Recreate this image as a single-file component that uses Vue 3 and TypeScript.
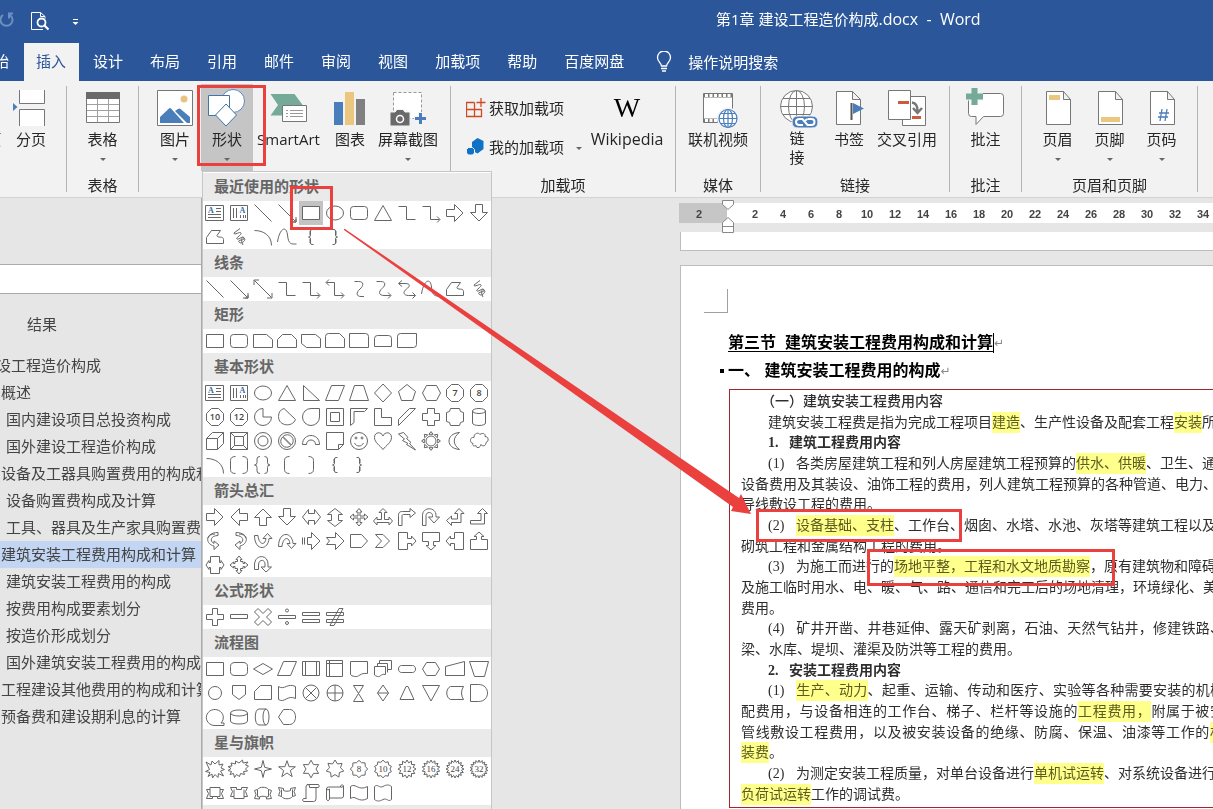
<script setup lang="ts">
interface Shape {
  d: string
  label?: string
  serif?: boolean
  letter?: number
}
interface Section {
  title: string
  shapes: string[]
}
interface Outline {
  text: string
  level: number
  current?: boolean
}
interface Piece {
  t: string
  hl?: boolean
}
interface Line {
  kind: 'caption' | 'bold' | 'item' | 'indent' | 'plain'
  no?: string
  full?: boolean
  parts: Piece[]
}

function polar(n: number, radii: number[], start = -90, cx = 12, cy = 12): string {
  const total = n * radii.length
  let out = ''
  for (let i = 0; i < total; i++) {
    const a = ((start + (360 / total) * i) * Math.PI) / 180
    const r = radii[i % radii.length]
    out += (i ? 'L' : 'M') + (cx + r * Math.cos(a)).toFixed(2) + ' ' + (cy + r * Math.sin(a)).toFixed(2)
  }
  return out + 'z'
}
function oval(rx: number, ry: number, cx = 12, cy = 12): string {
  return `M${cx - rx} ${cy}a${rx} ${ry} 0 1 0 ${2 * rx} 0a${rx} ${ry} 0 1 0 ${-2 * rx} 0z`
}
function rays(): string {
  let out = oval(5, 5)
  for (let i = 0; i < 8; i++) {
    const a = (i * Math.PI) / 4
    const p = (r: number, k: number) =>
      (12 + r * Math.cos(a + k)).toFixed(2) + ' ' + (12 + r * Math.sin(a + k)).toFixed(2)
    out += `M${p(9.4, 0)}L${p(7, 0.3)}L${p(7, -0.3)}z`
  }
  return out
}

const octagon = 'M8.5 3.5h7l5 5v7l-5 5h-7l-5-5v-7z'
const rect = 'M3.5 5.5h17v13h-17z'
const ring = oval(8.5, 8.5)

const shapes: Record<string, Shape> = {
  textBox: { d: 'M2.5 4.5h18v15h-18zM13 7.5h5M13 10.5h5M5 13.5h13M5 16.5h13', letter: 8 },
  verticalTextBox: { d: 'M3.5 4.5h17v15h-17zM6.5 7v10M9.5 7v10M13.5 14v3M16.5 14v3M18.5 14v3', letter: 15.5 },
  line: { d: 'M3.5 3.5l17 17' },
  arrowLine: { d: 'M3.5 3.5l17 17M21 16v5h-5M21 18v3h-3' },
  doubleArrowLine: { d: 'M3.5 3.5l17 17M21 16v5h-5M3 8v-5h5' },
  rect: { d: rect },
  ellipse: { d: oval(8.5, 7) },
  roundRect: { d: 'M6.5 5.5h11q3 0 3 3v7q0 3-3 3h-11q-3 0-3-3v-7q0-3 3-3z' },
  triangle: { d: 'M12 4.5l8.5 15h-17z' },
  elbow: { d: 'M3.5 5.5h8v13h9' },
  elbowArrow: { d: 'M3.5 5.5h8v13h9M18 15.5l3 3-3 3' },
  elbowDouble: { d: 'M3.5 5.5h8v13h9M18 15.5l3 3-3 3M6 2.5l-3 3 3 3' },
  curveLine: { d: 'M7.5 4.5h4c6 0 5 4.5 1.5 7.5c-4 3.5-4 7.5 1 7.5h3' },
  curveArrow: { d: 'M5.5 4.5h4c6 0 5 4 1.5 7c-4 3.5-3 7 2 7h6.5M17 15.5l3 3-3 3' },
  curveDouble: { d: 'M4 6.5h6c6 0 5 3 1.5 5.5c-4 3-3 6.5 2 6.5h6.5M17.5 15.5l3 3-3 3M7 3.5l-3.5 3 3.5 3' },
  arrowRight: { d: 'M3.5 8.5h8v-5l8.5 8.5-8.5 8.5v-5h-8z' },
  arrowLeft: { d: 'M20.5 8.5h-8v-5l-8.5 8.5 8.5 8.5v-5h8z' },
  arrowUp: { d: 'M8.5 20.5v-8h-5l8.5-8.5 8.5 8.5h-5v8z' },
  arrowDown: { d: 'M8.5 3.5v8h-5l8.5 8.5 8.5-8.5h-5v-8z' },
  freeform: { d: 'M3.5 18.5v-6l5-7h9l-3.5 5c0 3 6.5 0 6.5 4v4z' },
  scribble: { d: 'M13 3.5l-6 4.5c0 3 6-2 7 0s-6 5-4 6 6-4 7-1-7 1-5 4 8-2 5-4-3 4-1 7' },
  arc: { d: 'M3.5 5.5c9 0 17 5 17 15' },
  curve: { d: 'M2.5 17c2-14 9-17 10-7s4 9 9 9' },
  braceLeft: { d: 'M14.5 4.5h-1.5q-1.5 0-1.5 1.5v4q0 2-2 2q2 0 2 2v4q0 1.5 1.5 1.5h1.5M11 6v4M11 14v4' },
  braceRight: { d: 'M9.5 4.5h1.5q1.5 0 1.5 1.5v4q0 2 2 2q-2 0-2 2v4q0 1.5-1.5 1.5h-1.5M13 6v4M13 14v4' },
  snipOne: { d: 'M2.5 5.5h13l6 5v8h-19z' },
  snipTwo: { d: 'M7.5 5.5h9l5 5v8h-19v-8z' },
  snipDiagonal: { d: 'M2.5 5.5h14l5 4v9h-14l-5-4z' },
  snipRound: { d: 'M5.5 4.5h11l5 5v9h-19v-11q0-3 3-3z' },
  roundOne: { d: 'M2.5 4.5h16q3 0 3 3v11h-19z' },
  roundTwo: { d: 'M6.5 6.5h11q3 0 3 3v8h-17v-8q0-3 3-3z' },
  roundDiagonal: { d: 'M5.5 4.5h16v11q0 3-3 3h-16v-11q0-3 3-3z' },
  rightTriangle: { d: 'M4.5 4.5l16 15h-16z' },
  parallelogram: { d: 'M8.5 4.5h13l-6 15h-13z' },
  trapezoid: { d: 'M7.5 4.5h9l5 15h-19z' },
  diamond: { d: 'M12 3l8.5 9-8.5 9-8.5-9z' },
  pentagon: { d: 'M12 3.5l8.5 7-3 9h-11l-3-9z' },
  hexagon: { d: 'M7.5 4.5h10l4 7.5-4 7.5h-10l-4-7.5z' },
  heptagon: { d: octagon, label: '7' },
  octagon: { d: octagon, label: '8' },
  decagon: { d: octagon, label: '10' },
  dodecagon: { d: octagon, label: '12' },
  pie: { d: 'M12 3.5v8.5h8.5a8.5 8.5 0 1 1-8.5-8.5z' },
  chord: { d: 'M9 3.5l11.5 11c-3 8-17 7-17-3 0-4 2-7 5.5-8z' },
  teardrop: { d: 'M12 3.5h8.5v8.5a8.5 8.5 0 1 1-8.5-8.5z' },
  frame: { d: 'M3.5 3.5h17v17h-17zM7.5 7.5h9v9h-9z' },
  halfFrame: { d: 'M3.5 3.5h17l-3 3h-10.5v11l-3.5 3z' },
  corner: { d: 'M3.5 3.5h7v9h10v8h-17z' },
  stripe: { d: 'M14.5 3.5h6l-17 17v-6z' },
  cross: { d: 'M8.5 3.5h7v5h5v7h-5v5h-7v-5h-5v-7h5z' },
  plaque: { d: 'M7.5 3.5h9q0 4 4 4v9q-4 0-4 4h-9q0-4-4-4v-9q4 0 4-4z' },
  can: { d: oval(6.5, 2.5, 12, 6) + 'M5.5 6v12c0 3.3 13 3.3 13 0v-12' },
  cube: { d: 'M3.5 9.5l6-6h11v11l-6 6h-11zM3.5 9.5h11v11M14.5 9.5l6-6' },
  bevel: { d: 'M3.5 3.5h17v17h-17zM7.5 7.5h9v9h-9zM3.5 3.5l4 4M20.5 3.5l-4 4M3.5 20.5l4-4M20.5 20.5l-4-4' },
  donut: { d: ring + oval(5, 5) },
  forbidden: { d: ring + 'M8 7.5a6 6 0 0 1 8.5 8.5zM7.5 8a6 6 0 0 0 8.5 8.5z' },
  blockArc: { d: 'M3.5 15.5c0-12 17-12 17 0h-4c0-6-9-6-9 0z' },
  foldedCorner: { d: 'M3.5 3.5h17v12l-5 5h-12zM15.5 20.5v-5h5' },
  smiley: { d: ring + oval(1, 1, 9, 9) + oval(1, 1, 15, 9) + 'M7.5 14c2 4 7 4 9 0' },
  heart: { d: 'M12 20.5c-3-4-8.5-7-8.5-12c0-6 7-6 8.5-1.5c1.5-4.5 8.5-4.5 8.5 1.5c0 5-5.5 8-8.5 12z' },
  lightning: { d: 'M3.5 5l5-1.5 4.5 5-1.5 1 4.5 4-1.5 1 6 6.5-9-5.5 1.5-1-5.5-3 2-1.5z' },
  sun: { d: rays() },
  moon: { d: 'M16.5 3.5c-14 1-14 16 0 17c-7-5-7-12 0-17z' },
  cloud: { d: 'M6 14.5c-4-1-3-7 1-6c0-5 5-5 6-3c2-2 6-1 5 2c4 0 4 5 1 6c0 4-4 4-5 2c-1 4-5 4-5 1c-2 1-4 0-3-2z' },
  bracketPair: { d: 'M8.5 3.5q-5 0-5 4v9q0 4 5 4M15.5 3.5q5 0 5 4v9q0 4-5 4' },
  bracePair: { d: 'M9 3.5q-3 0-3 2.5v3.5q0 2.5-2.5 2.5q2.5 0 2.5 2.5v3.5q0 2.5 3 2.5M13.5 3.5q3 0 3 2.5v3.5q0 2.5 2.5 2.5q-2.5 0-2.5 2.5v3.5q0 2.5-3 2.5' },
  bracketLeft: { d: 'M14.5 3.5q-5 0-5 4v9q0 4 5 4' },
  bracketRight: { d: 'M9.5 3.5q5 0 5 4v9q0 4-5 4' },
  leftRight: { d: 'M3.5 12l6-7.5v4h6v-4l6 7.5-6 7.5v-4h-6v4z' },
  upDown: { d: 'M12 3.5l7.5 6h-4v6h4l-7.5 6-7.5-6h4v-6h-4z' },
  quadArrow: { d: 'M12 3.5l3 3.5h-2v4h4.5V9l3.5 3-3.5 3v-2H13v4.5h2L12 21l-3-3.5h2V13H6.5v2L3 12l3.5-3v2H11V7H9z' },
  threeWay: { d: 'M12 3.5l4 4h-2.5v7H18v-2.5l3.5 4-3.5 4V17.5H6V20l-3.5-4 3.5-4v2.5h4.5v-7H8z' },
  bentArrow: { d: 'M3.5 20.5v-10c0-3 1-4 4-4h7.5v-3l5.5 4.5-5.5 4.5v-3h-6.5c-1 0-1.5.5-1.5 1.5v9.5z' },
  uTurn: { d: 'M3.5 20.5V10.5c0-9 13.5-9 13.5 0v1.5h3.5l-5.5 6-5.5-6h4v-1.5c0-4-6.5-4-6.5 0v10z' },
  leftUp: { d: 'M3.5 15.5l5-4.5v3h6V8.5h-3l4.5-5 5 5h-3v9h-9.5v3z' },
  bentUp: { d: 'M3.5 15.5h10.5v-7h-3.5l5-5 5 5h-3v10.5h-14z' },
  curvedRight: { d: 'M15 3.5C2 3.5 2 15 11 17v3.5l5-4.5-5-4v2.5C6 12 8 6.5 15 6.5zM5 9c1-3 4-4 7-4' },
  curvedLeft: { d: 'M9 3.5C22 3.5 22 15 13 17v3.5l-5-4.5 5-4v2.5C18 12 16 6.5 9 6.5zM19 9c-1-3-4-4-7-4' },
  curvedUp: { d: 'M3.5 6.5C3.5 22 17 22 18 9.5h3l-4.5-5-4.5 5h3C14 17 8 16 7 6.5z' },
  curvedDown: { d: 'M3.5 17.5C3.5 2 17 2 18 14.5h3l-4.5 5-4.5-5h3C14 7 8 8 7 17.5z' },
  stripedArrow: { d: 'M3.5 8.5v7M5.5 8.5v7M8.5 8.5h4v-5l8.5 8.5-8.5 8.5v-5h-4z' },
  notchedArrow: { d: 'M3.5 8.5h9v-5l8.5 8.5-8.5 8.5v-5h-9l3-3.5z' },
  homePlate: { d: 'M3.5 5.5h11l6 6.5-6 6.5h-11z' },
  chevron: { d: 'M4.5 5.5h7.5l6.5 6.5-6.5 6.5h-7.5l6-6.5z' },
  calloutRight: { d: 'M3.5 3.5h9v6h4v-2.5l4.5 5-4.5 5v-2.5h-4v6h-9z' },
  calloutDown: { d: 'M3.5 3.5h17v9h-6v4h2.5l-5 4.5-5-4.5h2.5v-4h-6z' },
  calloutLeft: { d: 'M20.5 3.5h-9v6h-4v-2.5l-4.5 5 4.5 5v-2.5h4v6h9z' },
  calloutUp: { d: 'M3.5 20.5h17v-10h-6v-3h2.5l-5-4.5-5 4.5h2.5v3h-6z' },
  calloutLeftRight: { d: 'M7.5 3.5h9v6h1.5v-2l3 4.5-3 4.5v-2h-1.5v6h-9v-6h-1.5v2l-3-4.5 3-4.5v2h1.5z' },
  calloutQuad: { d: 'M12 3l3 3.5h-1.5v2H16V10.5h1.5V9l3.5 3-3.5 3v-1.5H16v2h-2.5v2H15L12 21l-3-3.5h1.5v-2H8V13.5H6.5V15L3 12l3.5-3v1.5H8V8.5h2.5v-2H9z' },
  circularArrow: { d: 'M3.5 16.5V12c0-11 13.5-11 13.5-1v3h3.5l-5.5 5-5-5h4v-3c0-5-6.5-5-6.5 1v4.5z' },
  plus: { d: 'M9.5 3.5h5v6h6v5h-6v6h-5v-6h-6v-5h6z' },
  minus: { d: 'M3.5 9.5h17v4h-17z' },
  multiply: { d: 'M7 3.5l5 5 5-5 3.5 3.5-5 5 5 5-3.5 3.5-5-5-5 5-3.5-3.5 5-5-5-5z' },
  divide: { d: 'M3.5 10.5h17v3h-17z' + oval(1.5, 1.5, 12, 5.5) + oval(1.5, 1.5, 12, 18) },
  equal: { d: 'M3.5 7.5h17v3h-17zM3.5 14.5h17v3h-17z' },
  notEqual: { d: 'M3.5 7.5h17v3h-17zM3.5 14.5h17v3h-17zM7 20.5l9-17h4l-9 17z' },
  flowParallelogram: { d: 'M8.5 4.5h13l-6 14h-13z' },
  flowRound: { d: 'M8 5.5h8q4.5 0 4.5 4v5q0 4-4.5 4h-8q-4.5 0-4.5-4v-5q0-4 4.5-4z' },
  decision: { d: 'M12 6.5l9.5 5.5-9.5 5.5-9.5-5.5z' },
  predefined: { d: 'M3.5 4.5h17v14h-17zM6.5 4.5v14M17.5 4.5v14' },
  internal: { d: 'M3.5 3.5h16v16h-16zM6.5 3.5v16M3.5 6.5h16' },
  document: { d: 'M3.5 4.5h17v12c-8-1-8 4-13 3q-3-.5-4-2z' },
  multiDocument: { d: 'M3.5 9.5h11v8c-5-1-5 3-8 2q-2-.5-3-1.5zM6.5 9.5v-3h10v9M8.5 6.5v-3h12v9h-4' },
  terminator: { d: 'M6.5 8.5h11c4 0 4 7 0 7h-11c-4 0-4-7 0-7z' },
  preparation: { d: 'M7.5 5.5h9l4 6.5-4 6.5h-9l-4-6.5z' },
  manualInput: { d: 'M2.5 9.5l19-5v14h-19z' },
  manualOperation: { d: 'M2.5 4.5h19l-4 15h-10z' },
  connector: { d: oval(6.5, 6.5) },
  offPage: { d: 'M5.5 4.5h13v9l-6.5 5-6.5-5z' },
  card: { d: 'M3.5 10.5l6-6h11v14h-17z' },
  tape: { d: 'M3.5 5.5c6 4 9-4 17 0v12c-8-4-11 5-17 1z' },
  summing: { d: oval(8, 8) + 'M6.5 6.5l11 11M17.5 6.5l-11 11' },
  or: { d: oval(8, 8) + 'M12 4v16M4 12h16' },
  collate: { d: 'M6.5 4.5h10l-10 16h10z' },
  sort: { d: 'M12 4l5.5 8-5.5 8-5.5-8zM6.5 12h11' },
  extract: { d: 'M11 5.5h2l6 13h-14z' },
  merge: { d: 'M3.5 4.5h17l-8.5 15.5z' },
  stored: { d: 'M7.5 5.5h13q-4 6.5 0 13h-13c-5-2-5-11 0-13z' },
  delay: { d: 'M3.5 3.5h8c12 0 12 17 0 17h-8z' },
  sequential: { d: 'M12 20.5a8.5 8 0 1 1 6-2.5h3v2.5z' },
  magneticDisk: { d: oval(8.5, 3, 12, 8) + 'M3.5 8v8c0 4 17 4 17 0v-8' },
  directAccess: { d: oval(3, 8, 15, 12) + 'M15 4h-7c-5 0-5 16 0 16h7' },
  display: { d: 'M8.5 4.5h6c8 0 8 15 0 15h-6l-5-7.5z' },
  burstOne: { d: 'M3 5l5 3 1-4 3 3 4-3.5v4.5l4-1-2 4 3.5 1.5-4 1.5 3 5-5-2.5-.5 4-3-3-2.5 3.5-.5-4-4 2.5 2-4-4.5-1 4-2z' },
  burstTwo: { d: 'M4 6l4.5 1 0-3 3.5 2 3.5-3 .5 3 5-1-2.5 3 3 1-3 3 2 2-4 .5 1 3-4-1-1 3-3-2-2 3-1-4-3.5 1 1.5-3-3.5-1 3-2-3-2 4-.5z' },
  star4: { d: polar(4, [8.5, 2.4]) },
  star5: { d: polar(5, [8.8, 3.5], -90, 12, 12.5) },
  star6: { d: polar(6, [8.8, 5]) },
  star7: { d: polar(7, [9, 5.6]) },
  star8: { d: polar(8, [8.6, 6.8]), label: '8', serif: true },
  star10: { d: polar(10, [8.8, 7]), label: '10', serif: true },
  star12: { d: polar(12, [9, 6.4]), label: '12', serif: true },
  star16: { d: polar(14, [9, 6.4]), label: '16', serif: true },
  star24: { d: polar(16, [9, 6.6]), label: '24', serif: true },
  star32: { d: polar(18, [9, 6.6]), label: '32', serif: true },
  ribbonUp: { d: 'M3.5 8.5h3.5v-2h10v2h3.5l-2 4 2 5h-6v-2h-5v2h-6l2-5zM7 8.5v7h2.5M17 8.5v7h-2.5' },
  ribbonDown: { d: 'M3.5 6.5h6v2h5v-2h6l-2 4 2 5h-3.5v2h-10v-2h-3.5l2-5zM7 15.5v-7M17 15.5v-7' },
  curvedRibbonUp: { d: 'M3.5 9.5l3-1c2-3 9-3 11 0l3 1-1.5 4 1.5 4-5 .5v-2c-2-1-5-1-7 0v2l-5-.5 1.5-4zM6.5 8.5v7l2 .5M17.5 8.5v7l-2 .5' },
  curvedRibbonDown: { d: 'M3.5 6.5l5 1v2c2 1 5 1 7 0v-2l5-1-1.5 4 1.5 4-3 1c-2 3-9 3-11 0l-3-1 1.5-4zM6.5 15.5v-7M17.5 15.5v-7' },
  scrollVertical: { d: 'M8 3.5h11.5q1.5 1.5 0 3h-2.5v11.5q0 2.5-2.5 2.5h-10q-2-1.5 0-3h2.5v-11.5q0-2.5 2-2.5t1.5 3h6.5M5.5 17.5h2' },
  scrollHorizontal: { d: 'M3.5 8q0-2 2-2h12v-1q1.5-3 3 0v10q0 2-2 2h-12v1.5q-1.5 2.5-3 0zM3.5 8q1.5 2 3 0v9M17.5 6q1.5 1 3-1' },
  wave: { d: 'M3.5 5.5c5-4 8 5 17 0v12c-9 5-12-4-17 0z' },
  doubleWave: { d: 'M3.5 5.5c3-3 5 2 8.5 0s6-2 8.5 0v13c-3 3-5-2-8.5 0s-6 2-8.5 0z' },
}

const sections: Section[] = [
  {
    title: '最近使用的形状',
    shapes: ['textBox', 'verticalTextBox', 'line', 'arrowLine', 'rect', 'ellipse', 'roundRect', 'triangle', 'elbow', 'elbowArrow', 'arrowRight', 'arrowDown', 'freeform', 'scribble', 'arc', 'curve', 'braceLeft', 'braceRight'],
  },
  {
    title: '线条',
    shapes: ['line', 'arrowLine', 'doubleArrowLine', 'elbow', 'elbowArrow', 'elbowDouble', 'curveLine', 'curveArrow', 'curveDouble', 'curve', 'freeform', 'scribble'],
  },
  {
    title: '矩形',
    shapes: ['rect', 'roundRect', 'snipOne', 'snipTwo', 'snipDiagonal', 'snipRound', 'roundOne', 'roundTwo', 'roundDiagonal'],
  },
  {
    title: '基本形状',
    shapes: ['textBox', 'verticalTextBox', 'ellipse', 'triangle', 'rightTriangle', 'parallelogram', 'trapezoid', 'diamond', 'pentagon', 'hexagon', 'heptagon', 'octagon', 'decagon', 'dodecagon', 'pie', 'chord', 'teardrop', 'frame', 'halfFrame', 'corner', 'stripe', 'cross', 'plaque', 'can', 'cube', 'bevel', 'donut', 'forbidden', 'blockArc', 'foldedCorner', 'smiley', 'heart', 'lightning', 'sun', 'moon', 'cloud', 'arc', 'bracketPair', 'bracePair', 'bracketLeft', 'bracketRight', 'braceLeft', 'braceRight'],
  },
  {
    title: '箭头总汇',
    shapes: ['arrowRight', 'arrowLeft', 'arrowUp', 'arrowDown', 'leftRight', 'upDown', 'quadArrow', 'threeWay', 'bentArrow', 'uTurn', 'leftUp', 'bentUp', 'curvedRight', 'curvedLeft', 'curvedUp', 'curvedDown', 'stripedArrow', 'notchedArrow', 'homePlate', 'chevron', 'calloutRight', 'calloutDown', 'calloutLeft', 'calloutUp', 'calloutLeftRight', 'calloutQuad', 'circularArrow'],
  },
  { title: '公式形状', shapes: ['plus', 'minus', 'multiply', 'divide', 'equal', 'notEqual'] },
  {
    title: '流程图',
    shapes: ['rect', 'flowRound', 'decision', 'flowParallelogram', 'predefined', 'internal', 'document', 'multiDocument', 'terminator', 'preparation', 'manualInput', 'manualOperation', 'connector', 'offPage', 'card', 'tape', 'summing', 'or', 'collate', 'sort', 'extract', 'merge', 'stored', 'delay', 'sequential', 'magneticDisk', 'directAccess', 'display'],
  },
  {
    title: '星与旗帜',
    shapes: ['burstOne', 'burstTwo', 'star4', 'star5', 'star6', 'star7', 'star8', 'star10', 'star12', 'star16', 'star24', 'star32', 'ribbonUp', 'ribbonDown', 'curvedRibbonUp', 'curvedRibbonDown', 'scrollVertical', 'scrollHorizontal', 'wave', 'doubleWave'],
  },
]

const tabs = ['开始', '插入', '设计', '布局', '引用', '邮件', '审阅', '视图', '加载项', '帮助', '百度网盘']

const outline: Outline[] = [
  { text: '建设工程造价构成', level: 0 },
  { text: '概述', level: 1 },
  { text: '国内建设项目总投资构成', level: 2 },
  { text: '国外建设工程造价构成', level: 2 },
  { text: '设备及工器具购置费用的构成和', level: 1 },
  { text: '设备购置费构成及计算', level: 2 },
  { text: '工具、器具及生产家具购置费', level: 2 },
  { text: '建筑安装工程费用构成和计算', level: 1, current: true },
  { text: '建筑安装工程费用的构成', level: 2 },
  { text: '按费用构成要素划分', level: 2 },
  { text: '按造价形成划分', level: 2 },
  { text: '国外建筑安装工程费用的构成', level: 2 },
  { text: '工程建设其他费用的构成和计算', level: 1 },
  { text: '预备费和建设期利息的计算', level: 1 },
]

const ruler = Array.from({ length: 17 }, (_, i) => (i + 1) * 2)

const lines: Line[] = [
  { kind: 'caption', parts: [{ t: '（一）建筑安装工程费用内容' }] },
  { kind: 'indent', full: true, parts: [{ t: '建筑安装工程费是指为完成工程项目' }, { t: '建造', hl: true }, { t: '、生产性设备及配套工程' }, { t: '安装', hl: true }, { t: '所需' }] },
  { kind: 'bold', no: '1.', parts: [{ t: '建筑工程费用内容' }] },
  { kind: 'item', no: '(1)', full: true, parts: [{ t: '各类房屋建筑工程和列人房屋建筑工程预算的' }, { t: '供水、供暖', hl: true }, { t: '、卫生、通风' }] },
  { kind: 'plain', full: true, parts: [{ t: '设备费用及其装设、油饰工程的费用，列人建筑工程预算的各种管道、电力、电' }] },
  { kind: 'plain', parts: [{ t: '导线敷设工程的费用。' }] },
  { kind: 'item', no: '(2)', full: true, parts: [{ t: '设备基础、支柱', hl: true }, { t: '、工作台、烟囱、水塔、水池、灰塔等建筑工程以及各' }] },
  { kind: 'plain', parts: [{ t: '砌筑工程和金属结构工程的费用。' }] },
  { kind: 'item', no: '(3)', full: true, parts: [{ t: '为施工而进行的' }, { t: '场地平整，工程和水文地质勘察', hl: true }, { t: '，原有建筑物和障碍物' }] },
  { kind: 'plain', full: true, parts: [{ t: '及施工临时用水、电、暖、气、路、通信和完工后的场地清理，环境绿化、美化' }] },
  { kind: 'plain', parts: [{ t: '费用。' }] },
  { kind: 'item', no: '(4)', full: true, parts: [{ t: '矿井开凿、井巷延伸、露天矿剥离，石油、天然气钻井，修建铁路、' }] },
  { kind: 'plain', parts: [{ t: '梁、水库、堤坝、灌渠及防洪等工程的费用。' }] },
  { kind: 'bold', no: '2.', parts: [{ t: '安装工程费用内容' }] },
  { kind: 'item', no: '(1)', full: true, parts: [{ t: '生产、动力', hl: true }, { t: '、起重、运输、传动和医疗、实验等各种需要安装的机械' }] },
  { kind: 'plain', full: true, parts: [{ t: '配费用，与设备相连的工作台、梯子、栏杆等设施的' }, { t: '工程费用，', hl: true }, { t: '附属于被安' }] },
  { kind: 'plain', full: true, parts: [{ t: '管线敷设工程费用，以及被安装设备的绝缘、防腐、保温、油漆等工作的' }, { t: '材', hl: true }] },
  { kind: 'plain', parts: [{ t: '装费', hl: true }, { t: '。' }] },
  { kind: 'item', no: '(2)', full: true, parts: [{ t: '为测定安装工程质量，对单台设备进行' }, { t: '单机试运转', hl: true }, { t: '、对系统设备进行无' }] },
  { kind: 'plain', parts: [{ t: '负荷试运转', hl: true }, { t: '工作的调试费。' }] },
]
</script>

<template>
  <div class="app">
    <header class="top">
      <div class="titlebar">
        <button class="quick undo" aria-label="撤销">
          <svg width="14" height="18" viewBox="0 0 14 18"><path d="M3 4a6 6 0 1 0 7 0M13 2.5h-4v5" fill="none" stroke="#6f8fc0" stroke-width="2" /></svg>
        </button>
        <button class="quick preview" aria-label="打印预览">
          <svg width="20" height="20" viewBox="0 0 20 20">
            <path d="M13 18.5H1.5v-17h9l4.5 4v2M10.5 1.5v4h4.5" fill="none" stroke="#fff" />
            <circle cx="11.5" cy="11.5" r="4" fill="none" stroke="#fff" stroke-width="1.8" />
            <path d="M14.5 14.5l4 4" stroke="#fff" stroke-width="2.2" />
          </svg>
        </button>
        <button class="quick more" aria-label="自定义快速访问工具栏">
          <svg width="8" height="8" viewBox="0 0 8 8"><path d="M1 1.5h5" stroke="#fff" /><path d="M.5 4h6l-3 3z" fill="#fff" /></svg>
        </button>
        <h1 class="title">第1章 建设工程造价构成<span>.docx&nbsp; -&nbsp; Word</span></h1>
      </div>
      <nav class="tabs">
        <button v-for="tab in tabs" :key="tab" class="tab" :class="{ active: tab === '插入' }">{{ tab }}</button>
        <button class="tell">
          <svg width="16" height="22" viewBox="0 0 16 22">
            <path d="M5.5 15c0-3-4-4-4-8.5a6.5 6.5 0 0 1 13 0c0 4.5-4 5.5-4 8.5z" fill="none" stroke="#fff" stroke-width="1.3" />
            <path d="M5 17.5h6M6 20h4" stroke="#fff" stroke-width="1.5" />
          </svg>
          操作说明搜索
        </button>
      </nav>
    </header>

    <section class="ribbon">
      <div class="group first">
        <div class="buttons end">
          <button class="big clipped"><span class="icon-space"></span><span>空白页</span></button>
          <button class="big">
            <svg class="icon" viewBox="0 0 40 40">
              <path d="M8.5 2v13.5h25V2M8.5 38V21.5h25V38" fill="#fff" stroke="#777" />
              <path d="M2 15l4.5 4-4.5 4z" fill="#4a7ebb" />
            </svg>
            <span>分页</span>
          </button>
        </div>
      </div>

      <div class="group">
        <div class="buttons">
          <button class="big">
            <svg class="icon" viewBox="0 0 40 40">
              <path d="M3.5 4.5h33v30h-33z" fill="#fff" stroke="#777" />
              <path d="M3 4h34v7H3z" fill="#6a6a6a" />
              <path d="M4 16.5h32M4 22.5h32M4 28.5h32M14.5 11v23M25.5 11v23" stroke="#a0a0a0" />
            </svg>
            <span>表格</span><i class="caret"></i>
          </button>
        </div>
        <p class="group-name">表格</p>
      </div>

      <div class="group">
        <div class="buttons">
          <button class="big">
            <svg class="icon" viewBox="0 0 40 40">
              <path d="M2.5 2.5h35v35h-35z" fill="#fff" stroke="#777" />
              <circle cx="29" cy="11" r="3.5" fill="#eac282" />
              <path d="M5 35v-6l9-8.5q1-1 2 0L29 35zM20 23l3-2q1.5-1 2.5 0L35 29v6h-3z" fill="#4a7ebb" />
            </svg>
            <span>图片</span><i class="caret"></i>
          </button>
          <div class="menu-host">
            <button class="big pressed" aria-expanded="true">
              <svg class="icon" viewBox="0 0 40 40">
                <circle cx="26" cy="13" r="11.5" fill="#fff" stroke="#5f88bd" />
                <path d="M1.5 7.5h21v20h-21z" fill="#fff" stroke="#4572a7" />
                <path d="M19 16l10.5 11L19 38 8.5 27z" fill="#fff" stroke="#4572a7" />
              </svg>
              <span>形状</span><i class="caret"></i>
            </button>
            <div class="gallery">
              <section v-for="(section, s) in sections" :key="section.title">
                <h2>{{ section.title }}</h2>
                <div class="cells">
                  <button v-for="(key, i) in section.shapes" :key="i" class="cell" :class="{ chosen: s === 0 && key === 'rect' }" :aria-label="key">
                    <svg width="24" height="24" viewBox="0 0 24 24">
                      <path :d="shapes[key].d" />
                      <text v-if="shapes[key].letter" class="letter" :x="shapes[key].letter" y="12">A</text>
                      <text v-if="shapes[key].label" class="number" :class="{ serif: shapes[key].serif }" x="12" y="15">{{ shapes[key].label }}</text>
                    </svg>
                  </button>
                </div>
              </section>
              <div class="gallery-tail"></div>
            </div>
          </div>
          <button class="big smart">
            <svg class="icon" viewBox="0 0 40 40">
              <path d="M1.5 6h24l8.5 11.5H13V27.5H1.5L9 17z" fill="#74aa97" />
              <path d="M13.5 17.5h24v16h-24z" fill="#fff" stroke="#777" />
              <path d="M17 22.5h2M17 25.5h2M17 28.5h2M21 22.5h13M21 25.5h13M21 28.5h13" stroke="#999" />
            </svg>
            <span>SmartArt</span>
          </button>
          <button class="big">
            <svg class="icon" viewBox="0 0 40 40">
              <path d="M4 14h9v23H4z" fill="#4a7ebb" /><path d="M15 4h9v33h-9z" fill="#eac67f" /><path d="M26 11h9v26h-9z" fill="#808080" />
            </svg>
            <span>图表</span>
          </button>
          <button class="big wide">
            <svg class="icon" viewBox="0 0 40 40">
              <path d="M5.5 4.5h28v26h-28z" fill="#fff" stroke="#999" stroke-dasharray="3 2" />
              <path d="M2 24h5l2-2.5h6l2 2.5h5v14H2z" fill="#6a6a6a" stroke="#f2f2f2" />
              <circle cx="12" cy="31" r="3.5" fill="none" stroke="#fff" stroke-width="1.5" />
              <path d="M26 30.5h13M32.5 24v13" stroke="#f2f2f2" stroke-width="5" />
              <path d="M27 30.5h11M32.5 25v11" stroke="#4a7ebb" stroke-width="3" />
            </svg>
            <span>屏幕截图</span><i class="caret"></i>
          </button>
        </div>
      </div>

      <div class="group">
        <div class="buttons addins">
          <div class="stack">
            <button class="small">
              <svg width="20" height="20" viewBox="0 0 20 20">
                <path d="M8.5 4.5h-8v14h15v-7h-15M8.5 4.5v14M15 0v9M10.5 4.5h9" fill="none" stroke="#cf4a21" stroke-width="1.3" />
              </svg>
              获取加载项
            </button>
            <button class="small">
              <svg width="20" height="20" viewBox="0 0 20 20">
                <path d="M11.5 1l6 3v8l-6 4.5-5.5-3V5z" fill="#0f72c5" />
                <path d="M2.5 10.5h4l2 2v3.5l-2 2h-4l-2-2v-3.5z" fill="#0f72c5" stroke="#f2f2f2" />
              </svg>
              我的加载项 <i class="caret"></i>
            </button>
          </div>
          <button class="big wiki"><span class="w">W</span><span>Wikipedia</span></button>
        </div>
        <p class="group-name">加载项</p>
      </div>

      <div class="group">
        <div class="buttons">
          <button class="big wide">
            <svg class="icon" viewBox="0 0 40 40">
              <path d="M5.5 5.5h29v29h-29z" fill="#fff" stroke="#777" />
              <path d="M6 7.5h28M6 32.5h28" stroke="#777" stroke-width="4" />
              <path d="M7 7.5h27M7 32.5h27" stroke="#fff" stroke-width="3" stroke-dasharray="3 1.5" />
              <circle cx="30" cy="30.5" r="11" fill="#f2f2f2" />
              <g fill="#fff" stroke="#4a7ebb" stroke-width="1.2">
                <circle cx="30" cy="30.5" r="9" /><ellipse cx="30" cy="30.5" rx="4.5" ry="9" /><path d="M30 21.5v18M21 30.5h18M22.5 25.5h15M22.5 35.5h15" />
              </g>
            </svg>
            <span>联机视频</span>
          </button>
        </div>
        <p class="group-name">媒体</p>
      </div>

      <div class="group">
        <div class="buttons">
          <button class="big narrow-text">
            <svg class="icon" viewBox="0 0 40 40">
              <g fill="#fff" stroke="#777">
                <circle cx="19.5" cy="18.5" r="16" /><ellipse cx="19.5" cy="18.5" rx="8" ry="16" /><path d="M19.5 2.5v32M3.5 18.5h32M6 10.5h27M6 26.5h27" />
              </g>
              <path d="M21 28h14q6 0 6 6t-6 6h-14q-6 0-6-6t6-6z" fill="#4a7ebb" stroke="#f2f2f2" />
              <path d="M26 37h-3.5q-3.5 0-3.5-3t3.5-3h3l5 6h4q3 0 3-3t-3-3h-4M30 31l-3 3" fill="none" stroke="#fff" stroke-width="2" />
            </svg>
            <span>链<br />接</span>
          </button>
          <button class="big">
            <svg class="icon" viewBox="0 0 40 40">
              <path d="M7.5 3.5h16l8 8v25h-24zM23.5 3.5v8h8" fill="#fff" stroke="#777" />
              <path d="M22.5 15v17" stroke="#555" stroke-width="2" /><path d="M24 15l11 5.5-11 5.5z" fill="#4a7ebb" />
            </svg>
            <span>书签</span>
          </button>
          <button class="big wide">
            <svg class="icon" viewBox="0 0 40 40">
              <path d="M15.5 8.5h23v29h-23z" fill="#fff" stroke="#777" />
              <path d="M1.5 2.5h22v29h-22z" fill="#fff" stroke="#777" />
              <path d="M11 14.5h11M25 29.5h9" stroke="#cc5c40" stroke-width="3" />
              <path d="M25 14.5q6 1 5.5 9M26 20l4.5 5 4.5-5" fill="none" stroke="#777" stroke-width="2.5" />
            </svg>
            <span>交叉引用</span>
          </button>
        </div>
        <p class="group-name">链接</p>
      </div>

      <div class="group">
        <div class="buttons">
          <button class="big">
            <svg class="icon" viewBox="0 0 40 40">
              <path d="M5.5 5.5h29q3 0 3 3v17q0 3-3 3H17.5l-7.5 8v-8H5.5q-3 0-3-3v-17q0-3 3-3z" fill="#fff" stroke="#777" />
              <path d="M8.5 0v17M0 8.5h17" stroke="#f2f2f2" stroke-width="8" /><path d="M8.5 0v17M0 8.5h17" stroke="#74aa97" stroke-width="6" />
            </svg>
            <span>批注</span>
          </button>
        </div>
        <p class="group-name">批注</p>
      </div>

      <div class="group">
        <div class="buttons">
          <button class="big">
            <svg class="icon" viewBox="0 0 40 40">
              <path d="M8.5 3.5h17l7 8v25h-24zM25.5 3.5v8h7" fill="#fff" stroke="#777" /><path d="M11 7h11v5H11z" fill="#eac67f" />
            </svg>
            <span>页眉</span><i class="caret"></i>
          </button>
          <button class="big">
            <svg class="icon" viewBox="0 0 40 40">
              <path d="M8.5 3.5h17l7 8v25h-24zM25.5 3.5v8h7" fill="#fff" stroke="#777" /><path d="M11 29h19v5H11z" fill="#eac67f" />
            </svg>
            <span>页脚</span><i class="caret"></i>
          </button>
          <button class="big">
            <svg class="icon" viewBox="0 0 40 40">
              <path d="M8.5 3.5h17l7 8v25h-24zM25.5 3.5v8h7" fill="#fff" stroke="#777" />
              <path d="M20 21l-2 12M25 21l-2 12M17 25h10M16 29h10" stroke="#4a7ebb" stroke-width="1.3" />
            </svg>
            <span>页码</span><i class="caret"></i>
          </button>
        </div>
        <p class="group-name">页眉和页脚</p>
      </div>

      <div class="group last">
        <div class="buttons start">
          <button class="big text-box"><span class="icon-space"></span><span>文本框</span></button>
        </div>
      </div>
    </section>

    <div class="workspace">
      <aside class="navpane">
        <input class="search" type="text" aria-label="搜索文档" />
        <h2 class="result">结果</h2>
        <ul>
          <li v-for="item in outline" :key="item.text" :class="['level' + item.level, { current: item.current }]">{{ item.text }}</li>
        </ul>
      </aside>

      <main class="document">
        <div class="ruler">
          <div class="margin-zone">2</div>
          <div class="ticks"><span v-for="n in ruler" :key="n">{{ n }}</span></div>
          <svg class="indent-marks" width="12" height="34" viewBox="0 0 12 34">
            <path d="M.5.5h11v4l-5.5 5-5.5-5zM.5 32.5v-10l5.5-5 5.5 5v10zM.5 26.5h11" fill="#fff" stroke="#888" />
          </svg>
        </div>
        <div class="page-end"></div>
        <article class="page">
          <div class="crop-mark"></div>
          <h3 class="heading"><u>第三节&nbsp; 建筑安装工程费用构成和计算</u><i class="cursor"></i><span class="mark">↵</span></h3>
          <h4 class="heading sub"><i class="bullet"></i>一、&nbsp;建筑安装工程费用的构成<span class="mark">↵</span></h4>
          <div class="scan">
            <div class="scan-text">
              <p v-for="(line, i) in lines" :key="i" :class="[line.kind, { full: line.full }]">
                <span v-if="line.no" class="no">{{ line.no }}</span><template v-for="(part, j) in line.parts" :key="j"><mark v-if="part.hl">{{ part.t }}</mark><template v-else>{{ part.t }}</template></template>
              </p>
            </div>
          </div>
        </article>
      </main>
    </div>

    <svg class="notes" aria-hidden="true">
      <g fill="none" stroke="#ea413f" stroke-width="3">
        <rect x="198.5" y="86.5" width="66" height="78" />
        <rect x="291.5" y="187.5" width="40" height="41" />
        <rect x="757.5" y="510.5" width="203" height="30" />
        <rect x="868.5" y="550.5" width="245" height="34" />
      </g>
      <path d="M344 229l1 0L739 498l2-4 10 20-20-3 2-4L344 230z" fill="#ea413f" />
    </svg>
  </div>
</template>

<style>
body {
  margin: 0;
}
</style>

<style scoped>
.app {
  position: relative;
  display: flex;
  flex-direction: column;
  height: 100vh;
  overflow: hidden;
  background: #e6e6e6;
  color: #262626;
  font: 15px/20px "Open Sans", "Noto Sans CJK SC", sans-serif;
}
h1, h2, h3, h4, p, ul {
  margin: 0;
  padding: 0;
  font-size: inherit;
  font-weight: normal;
}
button {
  margin: 0;
  padding: 0;
  border: 0;
  background: none;
  color: inherit;
  font: inherit;
  white-space: nowrap;
}
svg {
  display: block;
  flex: none;
}
.top {
  flex: none;
  background: #2b579a;
  color: #fff;
}
.titlebar {
  display: flex;
  align-items: center;
  height: 43px;
}
.quick.undo {
  margin-top: -4px;
}
.quick.preview {
  margin: -2px 0 0 16px;
}
.quick.more {
  margin-left: 22px;
}
.title {
  margin: -6px 0 0 636px;
  white-space: pre;
}
.title span {
  font-size: 16px;
}
.tabs {
  display: flex;
  gap: 2px;
  height: 38px;
  margin-left: -33px;
}
.tab {
  padding: 0 13px 2px 12px;
}
.tab.active {
  background: #f2f2f2;
  color: #2b579a;
}
.tell {
  display: flex;
  align-items: center;
  gap: 16px;
  margin-left: 17px;
  padding-bottom: 1px;
}
.ribbon {
  display: grid;
  flex: none;
  grid-template-columns: 67px 72px 312px 225px 85px 189px 72px 176px 1fr;
  height: 116px;
  border-bottom: 1px solid #d2d2d2;
  background: #f2f2f2;
}
.group {
  display: flex;
  flex-direction: column;
  min-width: 0;
  height: 106px;
  margin-top: 5px;
  border-right: 1px solid #b5b5b5;
}
.group.last {
  overflow: hidden;
  border: 0;
}
.group.first {
  overflow: hidden;
}
.buttons {
  display: flex;
  justify-content: center;
  height: 85px;
}
.buttons.end {
  justify-content: flex-end;
  padding-right: 9px;
}
.buttons.start {
  justify-content: flex-start;
}
.group-name {
  margin-top: 4px;
  text-align: center;
}
.big {
  display: flex;
  flex: none;
  flex-direction: column;
  align-items: center;
  width: 52px;
  height: 85px;
  padding-top: 2px;
}
.big.wide {
  width: 64px;
}
.big.smart {
  width: 71px;
}
.big.clipped {
  width: 48px;
  margin-right: 2px;
}
.big.text-box {
  width: 70px;
  padding-left: 12px;
}
.big > span {
  margin-top: 1px;
}
.big .icon-space {
  height: 40px;
  margin: 0;
}
.narrow-text > span {
  line-height: 19px;
}
.icon {
  width: 40px;
  height: 40px;
  overflow: visible;
}
.caret {
  width: 0;
  margin-top: 9px;
  border: 3px solid transparent;
  border-top-color: #666;
  border-bottom: 0;
}
.menu-host {
  position: relative;
}
.pressed {
  background: #c5c5c5;
  box-shadow: 0 -2px #c5c5c5;
}
.addins {
  justify-content: flex-start;
  padding-left: 15px;
}
.stack {
  display: flex;
  flex-direction: column;
  gap: 19px;
  width: 119px;
  padding-top: 12px;
}
.small {
  display: flex;
  align-items: center;
  gap: 3px;
}
.small .caret {
  margin: 2px 0 0 9px;
}
.wiki {
  width: 84px;
  font-size: 16px;
}
.big .w {
  height: 40px;
  margin: 0;
  color: #000;
  font: 28px/40px "Liberation Serif", serif;
}
.gallery {
  position: absolute;
  z-index: 5;
  top: 100%;
  left: 1px;
  width: 288px;
  padding-top: 1px;
  border: 1px solid #c6c6c6;
  background: #fff;
}
.gallery h2,
.gallery-tail {
  box-sizing: border-box;
  height: 28px;
  background: #eaeaea;
}
.gallery h2 {
  padding-left: 11px;
  color: #666;
  font-weight: bold;
  line-height: 26px;
}
.cells {
  display: grid;
  grid-template-columns: repeat(12, 24px);
}
.cell {
  height: 24px;
}
.cell.chosen {
  background: #c3c3c3;
}
.cell.chosen path {
  fill: #fff;
}
.cell path {
  fill: none;
  stroke: #666;
}
.letter {
  fill: #35699f;
  font: bold 8px "Liberation Serif", serif;
  text-anchor: middle;
}
.number {
  fill: #444;
  font: 600 9px "Open Sans", sans-serif;
  text-anchor: middle;
}
.number.serif {
  font: 9px "Liberation Serif", serif;
}
.workspace {
  display: flex;
  flex: 1;
  min-height: 0;
}
.navpane {
  box-sizing: border-box;
  flex: none;
  width: 202px;
  overflow: hidden;
  padding-top: 66px;
  border-right: 1px solid #ababab;
  color: #444;
}
.search {
  display: block;
  box-sizing: border-box;
  width: 100%;
  height: 30px;
  border: solid #ababab;
  border-width: 1px 0;
  border-radius: 0;
  background: #fff;
}
.result {
  padding: 20px 0 18px 27px;
}
.navpane ul {
  list-style: none;
}
.navpane li {
  height: 27px;
  line-height: 27px;
  white-space: nowrap;
}
.level0 {
  margin-left: -19px;
}
.level1 {
  padding-left: 1px;
}
.level2 {
  padding-left: 6px;
}
.navpane .current {
  background: #c2d5f2;
}
.document {
  flex: 1;
  min-width: 0;
  padding: 5px 0 0 477px;
}
.ruler {
  position: relative;
  display: flex;
  height: 20px;
  color: #444;
  font: bold 11px/22px "Liberation Sans", sans-serif;
}
.margin-zone {
  flex: none;
  box-sizing: border-box;
  width: 48px;
  padding-left: 17px;
  background: #c6c6c6;
}
.ticks {
  display: flex;
  flex: 1;
  min-width: 0;
  overflow: hidden;
  padding-left: 14px;
  background: #fff;
}
.ticks span {
  flex: none;
  width: 28px;
  text-align: center;
}
.indent-marks {
  position: absolute;
  top: -3px;
  left: 43px;
}
.page-end {
  height: 18px;
  margin: 9px 0 14px 1px;
  border: solid #bdbdbd;
  border-width: 0 0 1px 1px;
  background: #fff;
}
.page {
  height: 600px;
  margin-left: 1px;
  padding: 23px 0 0 47px;
  border: solid #bdbdbd;
  border-width: 1px 0 0 1px;
  background: #fff;
}
.crop-mark {
  box-sizing: border-box;
  width: 24px;
  height: 24px;
  margin: 0 0 16px -24px;
  border: solid #a0a0a0;
  border-width: 0 1px 1px 0;
}
.heading {
  display: flex;
  align-items: center;
  height: 28px;
  color: #000;
  font: bold 16px/28px "Liberation Sans", "Noto Sans CJK SC", sans-serif;
  white-space: nowrap;
}
.heading u {
  text-underline-offset: 3px;
}
.cursor {
  width: 1px;
  height: 20px;
  background: #000;
}
.mark {
  color: #888;
  font: 12px/28px "DejaVu Sans", sans-serif;
}
.bullet {
  width: 4px;
  height: 4px;
  margin: 0 4px 0 -8px;
  background: #000;
}
.scan {
  box-sizing: border-box;
  height: 419px;
  margin: 4px 0 0 1px;
  overflow: hidden;
  border: solid #a3262c;
  border-width: 1px 0 1px 1px;
}
.scan-text {
  display: flex;
  flex-direction: column;
  justify-content: space-between;
  height: 413px;
  margin-right: -11px;
  padding: 2px 0 0 11px;
  color: #2e2e2e;
  font: 14px/20px "Liberation Serif", "Noto Sans CJK SC", serif;
  white-space: nowrap;
}
.scan-text .full {
  text-align-last: justify;
}
.scan-text .indent,
.scan-text .item,
.scan-text .bold {
  padding-left: 27px;
}
.scan-text .caption {
  padding-left: 20px;
  font-weight: 500;
}
.scan-text .bold {
  font-weight: bold;
}
.no {
  display: inline-block;
  width: 28px;
  text-align-last: left;
}
.bold .no {
  width: 21px;
}
mark {
  padding: 3px 0;
  background: #ffff8c;
  color: #5c5c20;
  mix-blend-mode: multiply;
}
.notes {
  position: absolute;
  z-index: 10;
  top: 0;
  left: 0;
  width: 100%;
  height: 100%;
  pointer-events: none;
}
</style>
